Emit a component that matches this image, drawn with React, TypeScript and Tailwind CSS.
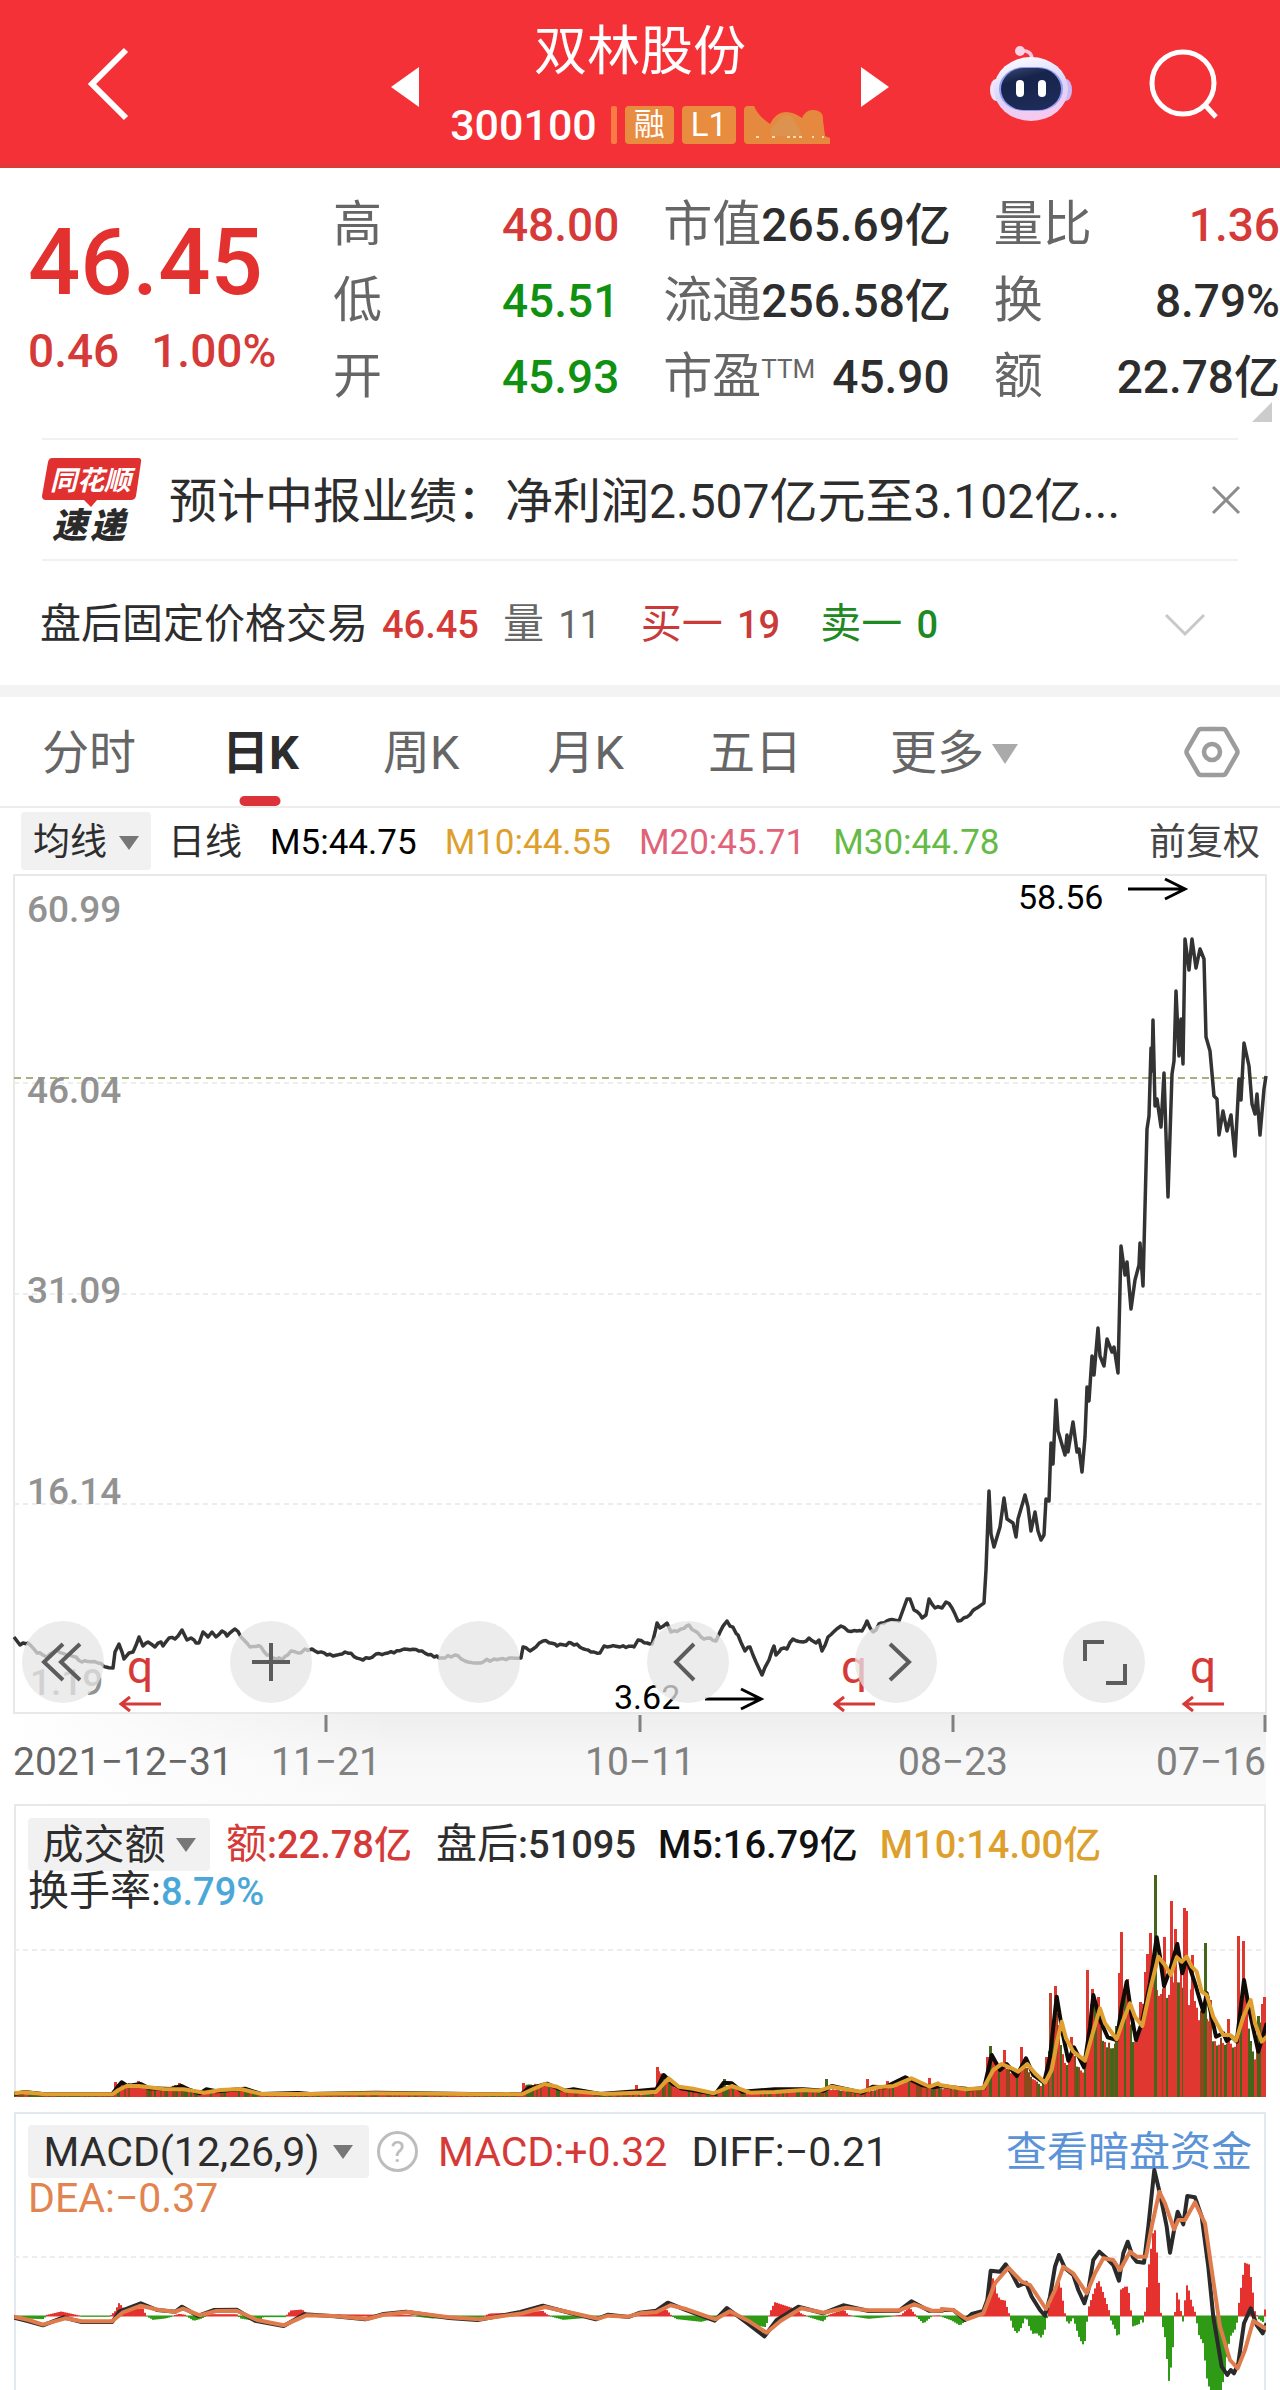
import React from "react";

type Pt = [number, number];

/* Chart traces are kept as "x,y x,y ..." strings. */
const parse = (s: string): Pt[] =>
  s
    .trim()
    .split(/\s+/)
    .map((p) => p.split(",").map(Number) as Pt);

const scale = (pts: Pt[], ox: number, oy: number, kx: number, ky: number): Pt[] =>
  pts.map(([x, y]) => [ox + x / kx, oy + y / ky]);

const toPath = (pts: Pt[]) =>
  pts.map(([x, y], i) => `${i ? "L" : "M"}${x.toFixed(1)} ${y.toFixed(1)}`).join("");

const noise = (n: number) => {
  const v = Math.sin(n * 127.1) * 43758.5453;
  return v - Math.floor(v);
};

const at = (pts: Pt[], x: number) => {
  for (let i = 1; i < pts.length; i++) {
    if (x <= pts[i][0]) {
      const [x0, y0] = pts[i - 1];
      const [x1, y1] = pts[i];
      return y0 + ((y1 - y0) * (x - x0)) / (x1 - x0 || 1);
    }
  }
  return pts[pts.length - 1][1];
};

const jitter = (pts: Pt[], step: number, amount: number): Pt[] => {
  const out: Pt[] = [];
  for (let i = 0; i < pts.length - 1; i++) {
    out.push(pts[i]);
    const [x0, y0] = pts[i];
    const [x1, y1] = pts[i + 1];
    for (let x = x0 + step; x < x1 - 1; x += step)
      out.push([x, y0 + ((y1 - y0) * (x - x0)) / (x1 - x0) + (noise(x) - 0.5) * amount]);
  }
  out.push(pts[pts.length - 1]);
  return out;
};

/* ---------- price ---------- */
const quietPrice = parse(`14,1637 20,1645 28,1643 37,1653 47,1657 57,1650 67,1655 76,1657 82,1662 98,1663 106,1667 113,1668
115,1652 119,1644 124,1659 129,1653 133,1652 139,1637 143,1646 148,1642 155,1647 161,1642 163,1646 169,1638 175,1639
182,1630 187,1640 191,1638 196,1643 199,1643 203,1632 208,1637 212,1632 216,1637 222,1631 227,1636 235,1629 241,1637
250,1647 261,1647 267,1655 282,1660 291,1651 298,1653 305,1649 312,1649 327,1655 333,1656 345,1652 363,1660 376,1654
388,1653 404,1649 422,1651 439,1658 455,1655 465,1661 478,1663 494,1659 521,1658 523,1647 530,1651 543,1641 557,1646
571,1643 588,1650 600,1653 604,1646 620,1647 634,1647 638,1640 652,1644 657,1623 660,1628 667,1623 671,1632 681,1629
689,1625 701,1637 716,1641 720,1632 727,1621 738,1635 745,1651 750,1647 756,1662 762,1675 769,1660 774,1646 776,1655
781,1649 787,1649 793,1639 803,1642 809,1638 816,1643 819,1640 822,1651 828,1637 841,1626 848,1631 862,1631 867,1621
873,1632 881,1623 889,1620 899,1621 903,1610 907,1599 910,1599 914,1610 922,1618 926,1615 929,1599 935,1608 942,1608
946,1602 952,1608 958,1621 967,1617 975,1609 984,1603`);
const rallyPrice = parse(`984,1603 986,1570 989,1491 991,1534 994,1547 1000,1527 1004,1498 1007,1519 1013,1523 1016,1537 1018,1519
1025,1495 1028,1507 1031,1531 1035,1512 1038,1531 1041,1540 1044,1535 1046,1499 1049,1501 1051,1443 1053,1464 1056,1400
1058,1431 1065,1455 1067,1435 1068,1452 1073,1422 1077,1452 1079,1449 1082,1472 1085,1437 1087,1387 1089,1401 1092,1356
1094,1375 1098,1328 1100,1356 1104,1366 1107,1339 1112,1352 1114,1347 1118,1373 1121,1246 1125,1275 1127,1262 1131,1309
1135,1280 1139,1265 1140,1243 1143,1286 1147,1129 1149,1116 1151,1048 1152,1071 1153,1020 1155,1106 1157,1099 1161,1127
1164,1073 1168,1197 1172,1074 1174,1061 1176,991 1179,1056 1181,1019 1183,1064 1185,939 1189,970 1192,939 1196,968
1200,949 1204,959 1206,1037 1210,1051 1214,1096 1217,1099 1219,1135 1223,1111 1227,1131 1231,1115 1235,1156 1239,1079
1241,1100 1244,1043 1249,1066 1252,1104 1255,1114 1257,1094 1260,1135 1264,1089 1266,1076`);
const pricePath = toPath([...jitter(quietPrice, 3, 3), ...rallyPrice]);

/* ---------- turnover ---------- */
const BASE = 2097;
const volLeft = (s: string) => scale(parse(s), 0, 1960, 2.45, 3);
const volMid = (s: string) => scale(parse(s), 640, 1960, 2.45, 3);
const volRight = (s: string) => scale(parse(s), 940, 1840, 3, 3);

const volMa10 = [
  ...volLeft(`35,400 60,397 110,403 275,403 290,390 310,378 340,378 400,387 450,388 500,398 540,390 590,387 640,402 760,402
  920,400 1200,403 1280,402 1310,385 1335,372 1365,380 1385,392 1420,395 1480,402 1560,398`),
  ...volMid(`0,398 40,395 70,355 95,380 130,386 180,400 225,378 270,398 330,396 400,390 440,392 470,380 540,395 580,382 620,378
  665,355 710,380 730,370`),
  ...volRight(`0,735 75,748 130,745 160,690 185,672 215,685 235,695 262,672 285,700 315,728 335,690 350,610 365,545 378,595
  400,635 435,662 455,590 480,505 495,550 530,598 550,540 570,490 585,530 607,558 630,450 655,350 675,375 692,405 710,352
  725,365 740,350 755,380 770,395 785,455 800,465 820,530 850,585 870,585 888,602 910,530 932,480 945,550 965,605 980,590`),
];
const volMa5 = [
  ...volLeft(`35,402 60,396 110,403 275,403 290,378 298,367 312,378 345,372 365,385 420,387 445,378 465,390 490,400 505,388
  530,394 600,386 640,402 730,399 760,402 920,398 1200,403 1278,402 1295,384 1315,380 1340,371 1365,384 1385,392 1405,388 1470,402 1560,394`),
  ...volMid(`0,392 40,388 58,345 80,372 100,385 185,402 205,368 225,370 250,395 330,388 400,388 450,392 470,378 545,398 570,380
  600,382 650,352 690,375 720,382`),
  ...volRight(`0,738 90,748 132,745 155,645 180,690 200,672 230,708 258,655 280,705 312,728 330,650 350,470 370,590 385,662
  402,622 432,682 450,560 460,465 480,540 503,592 530,600 545,500 560,425 575,530 588,600 605,550 630,430 650,292 660,350
  672,438 690,390 712,312 727,400 740,355 765,430 790,515 800,460 828,590 850,580 860,603 875,590 890,605 912,420 930,520
  955,635 980,550`),
];
const volTop = [
  ...volLeft(`35,400 70,404 275,404 283,372 310,370 400,385 440,372 470,392 520,392 600,388 640,404 1275,404 1285,372 1330,372
  1370,388 1430,392 1480,404 1545,402 1560,376`),
  ...volMid(`0,404 36,400 44,335 60,360 90,385 140,390 185,404 205,375 230,385 260,402 330,388 400,392 470,388 545,400 580,386
  620,380 660,354 700,380 730,372`),
  ...volRight(`0,745 80,750 130,742 135,690 140,652 150,625 158,660 185,680 205,690 225,705 240,690 255,680 270,710 300,735
  315,700 325,620 340,500 352,520 362,620 375,680 392,610 410,680 430,700 440,600 450,480 470,480 485,590 510,620 530,610
  545,430 560,430 575,590 590,590 600,520 615,440 630,350 645,430 660,450 680,440 700,400 720,400 742,470 755,440 770,520
  790,500 820,600 860,600 885,620 900,500 912,420 925,560 943,660 955,540 970,500 980,480`),
];
const RED = "#e03730";
const GREEN = "#44661a";
const spikes: [number, number, string][] = [
  [987, 2057, RED], [990, 2046, GREEN], [1004, 2050, RED], [1021, 2047, RED], [1046, 2057, RED], [1050, 1993, "#b8452c"],
  [1055, 1986, RED], [1071, 2037, RED], [1087, 1970, RED], [1092, 1989, RED], [1098, 1997, RED], [1116, 2026, GREEN],
  [1119, 1973, RED], [1121, 1932, RED], [1127, 1979, RED], [1140, 2002, RED], [1145, 1972, RED], [1147, 1954, RED],
  [1150, 1933, RED], [1155, 1875, GREEN], [1164, 1937, RED], [1171, 1901, RED], [1175, 1929, RED], [1184, 1908, RED],
  [1186, 1911, RED], [1192, 1955, RED], [1205, 1943, GREEN], [1210, 2000, "#b8452c"], [1228, 2019, RED], [1238, 1936, RED],
  [1243, 1941, RED], [1258, 2016, GREEN], [1262, 2004, RED], [1264, 1997, RED], [657, 2067, RED], [724, 2079, GREEN],
  [826, 2079, GREEN], [867, 2079, RED], [887, 2081, RED], [929, 2078, RED], [115, 2082, RED], [138, 2081, RED],
  [179, 2083, RED], [523, 2083, RED], [636, 2085, RED],
];
const bars = Array.from({ length: 626 }, (_, i) => {
  const x = 14 + i * 2;
  const h = BASE - at(volTop, x);
  return { x, h: Math.max(1, h * (0.9 + noise(i) * 0.14)), c: noise(i * 3 + 1) > 0.45 ? RED : noise(i) > 0.5 ? "#8a4a1c" : GREEN };
});

/* ---------- MACD ---------- */
const ZERO = 2316;
const macdRight = (s: string) => scale(parse(s), 940, 2110, 3, 3);
const slowLine = `35,1070 70,1080 105,1094 160,1075 200,1084 275,1084 300,1058 345,1037 390,1050 430,1055 448,1046 490,1066
530,1053 580,1052 630,1080 695,1096 750,1066 820,1068 900,1077 940,1064 1000,1056 1100,1072 1175,1078 1280,1060 1335,1041
1400,1058 1465,1076 1490,1067 1540,1070`;
const fastLine = `30,1072 70,1084 105,1096 155,1072 200,1086 275,1086 292,1055 345,1030 385,1050 430,1055 446,1040 485,1068
525,1050 580,1049 625,1082 695,1098 745,1063 820,1069 895,1078 940,1062 995,1055 1100,1074 1170,1080 1275,1056 1330,1037
1395,1058 1460,1078 1490,1064 1540,1071`;
const dea = [
  ...volLeft(slowLine),
  ...volMid(`0,1060 40,1056 75,1036 115,1048 185,1078 220,1054 265,1082 310,1118 345,1082 395,1045 450,1058 505,1043 560,1051
  635,1051 672,1033 715,1052 740,1052`),
  ...macdRight(`5,597 40,600 80,628 130,610 165,520 205,473 245,515 270,525 318,597 345,540 370,470 400,490 440,550 465,490
  490,445 520,450 540,480 570,425 590,440 618,440 635,350 658,245 675,280 702,358 715,330 735,330 765,277 795,340 815,480
  840,650 870,750 893,775 915,720 940,632 975,655 980,650`),
];
const diff = [
  ...volLeft(fastLine),
  ...volMid(`0,1058 40,1052 68,1028 108,1048 183,1082 213,1044 258,1085 305,1129 335,1080 388,1040 448,1060 498,1036 560,1053
  635,1052 665,1024 708,1052 740,1053`),
  ...macdRight(`5,600 40,600 75,630 95,612 130,603 142,570 152,482 180,485 197,463 215,490 235,528 258,518 275,560 300,600
  315,617 330,560 345,470 357,435 375,475 400,495 415,540 433,580 445,540 460,450 478,425 495,440 520,465 537,512 550,430
  563,395 578,440 590,455 612,458 625,350 643,180 655,230 668,290 680,350 690,428 705,345 713,305 730,343 742,258 765,262
  785,320 805,470 820,620 845,770 862,795 872,780 882,790 895,760 912,640 932,595 950,645 968,670 980,640`),
];
const hist = [
  ...volLeft(`35,1067 60,1074 105,1076 115,1066 150,1056 180,1064 200,1069 270,1069 282,1055 292,1030 305,1050 350,1046 358,1067
  375,1078 405,1074 440,1063 455,1066 475,1081 495,1074 510,1064 580,1064 590,1074 635,1084 645,1070 700,1070 712,1053
  740,1050 755,1064 1000,1066 1060,1074 1180,1072 1200,1062 1290,1058 1330,1054 1342,1066 1380,1078 1440,1072 1540,1066`),
  ...volMid(`0,1066 40,1062 62,1046 76,1066 90,1076 150,1084 195,1070 215,1050 235,1066 250,1076 285,1095 308,1100 318,1060
  330,1028 375,1046 398,1064 440,1080 450,1083 460,1067 500,1050 510,1066 560,1075 640,1066 660,1043 675,1066 695,1089 715,1068`),
  ...macdRight(`0,617 35,630 60,645 85,625 95,617 130,612 142,580 150,475 160,510 170,550 180,570 195,573 205,605 210,620
  220,655 230,668 240,660 258,617 268,650 278,670 290,668 305,683 318,650 323,605 335,570 350,520 360,515 370,580 378,630
  388,640 400,622 415,675 428,703 436,690 444,600 460,550 475,510 490,550 508,605 513,630 525,655 535,688 541,640 543,540
  560,528 570,560 574,617 578,648 600,640 605,620 610,640 616,600 625,480 643,340 652,440 662,600 665,630 675,680 688,822
  700,700 704,617 712,540 722,600 729,633 734,580 742,520 755,580 768,615 775,670 790,700 800,800 815,860 840,870 858,760
  870,680 890,650 893,610 905,520 915,460 928,465 938,540 945,605 955,625 970,635 975,600 980,590`),
];
const histBars = Array.from({ length: 626 }, (_, i) => {
  const x = 14 + i * 2;
  return { x, y: at(hist, x + 1) };
});

/* ---------- small pieces ---------- */
const Num = ({ children, className = "" }: { children: React.ReactNode; className?: string }) => (
  <span className={`text-[38px] ${className}`}>{children}</span>
);

const Caret = ({ className = "" }: { className?: string }) => (
  <svg viewBox="0 0 20 14" className={`h-[14px] w-5 ${className}`} aria-hidden="true">
    <path d="M0 0H20L10 14Z" fill="currentColor" />
  </svg>
);

const Robot = () => (
  <svg viewBox="0 0 82 76" className="h-[76px] w-[82px]" aria-hidden="true">
    <defs>
      <linearGradient id="shell" x1="0" y1="0" x2="0.3" y2="1">
        <stop offset="0" stopColor="#fff" />
        <stop offset="0.6" stopColor="#d9d6fb" />
        <stop offset="1" stopColor="#f6c9ee" />
      </linearGradient>
      <linearGradient id="visor" x1="0" y1="0" x2="0.4" y2="1">
        <stop offset="0" stopColor="#3c4a78" />
        <stop offset="0.35" stopColor="#16234a" />
        <stop offset="1" stopColor="#1d2b58" />
      </linearGradient>
    </defs>
    <path d="M30 5C38 4 42 7 42 14" fill="none" stroke="#fbc6df" strokeWidth="3.5" />
    <circle cx="30" cy="5" r="5" fill="#fbd3e6" />
    <ellipse cx="6" cy="44" rx="6" ry="11" fill="#f0e4fb" />
    <ellipse cx="76" cy="44" rx="6" ry="11" fill="#c9b8f4" />
    <ellipse cx="41" cy="43" rx="37" ry="32" fill="url(#shell)" />
    <rect x="9" y="21" width="64" height="44" rx="25" fill="#8f9af0" />
    <rect x="11" y="22" width="60" height="42" rx="23" fill="url(#visor)" />
    <rect x="26" y="34" width="8" height="17" rx="4" fill="#fff" />
    <rect x="48" y="34" width="8" height="17" rx="4" fill="#fff" />
  </svg>
);

const CourierLogo = () => (
  <svg viewBox="0 -10 100 106" className="h-[106px] w-[100px] shrink-0" role="img" aria-label="同花顺速递">
    <path d="M10 1H96Q100 1 99 5L94 39Q93 43 89 43H55L49 50L42 43H4Q0 43 0 39L6 5Q7 1 10 1Z" fill="#e0302f" />
    <text x="8" y="33" fontSize="27" fontWeight="700" fontStyle="italic" fill="#fff">
      同花顺
    </text>
    <text x="10" y="81" fontSize="35" fontWeight="900" fontStyle="italic" fill="#2b2b2b">
      速
    </text>
    <text x="48" y="81" fontSize="35" fontWeight="900" fontStyle="italic" fill="#2b2b2b">
      递
    </text>
  </svg>
);

const stats = [
  [
    { k: "高", v: "48.00", c: "text-[#d53a38]" },
    { k: "低", v: "45.51", c: "text-[#109112]" },
    { k: "开", v: "45.93", c: "text-[#109112]" },
  ],
  [
    { k: "市值", v: "265.69亿", c: "text-[#2d2d2d]" },
    { k: "流通", v: "256.58亿", c: "text-[#2d2d2d]" },
    { k: "市盈", sup: "TTM", v: "45.90", c: "text-[#2d2d2d]" },
  ],
  [
    { k: "量比", v: "1.36", c: "text-[#d53a38]" },
    { k: "换", v: "8.79%", c: "text-[#2d2d2d]" },
    { k: "额", v: "22.78亿", c: "text-[#2d2d2d]" },
  ],
];

const Marker = ({ x }: { x: number }) => (
  <g>
    <text x={x + 8} y="1683" fontSize="46" fill="#d53a38">
      q
    </text>
    <path d={`M${x + 42} 1704H${x + 2}M${x + 11} 1697L${x + 2} 1704L${x + 11} 1711`} fill="none" stroke="#d53a38" strokeWidth="3" />
  </g>
);

const tools = [
  { label: "最早", d: "M41 23L22 41L41 59M58 23L39 41L58 59" },
  { label: "放大", d: "M41 22V60M22 41H60" },
  { label: "缩小", d: "" },
  { label: "向左", d: "M47 23L29 41L47 59" },
  { label: "向右", d: "M35 23L54 41L35 59" },
  { label: "全屏", d: "M22 40V21H41M62 43V62H43" },
];

export default function App() {
  return (
    <main className="w-full overflow-hidden bg-white font-[Roboto,'Noto_Sans_CJK_SC',sans-serif] text-[#2d2d2d]">
      <header className="grid h-[168px] grid-cols-[1fr_498px_1fr] items-center border-b-4 border-[#df3a38] bg-[#f33136] pt-1 text-white">
        <button type="button" aria-label="返回" className="ml-[84px] w-12">
          <svg viewBox="0 0 48 76" className="h-[76px] w-12" aria-hidden="true">
            <path d="M42 4L8 38L42 72" fill="none" stroke="#fff" strokeWidth="6" />
          </svg>
        </button>
        <div className="flex items-center justify-between pt-1.5">
          <button type="button" aria-label="上一只">
            <svg viewBox="0 0 28 40" className="h-10 w-7" aria-hidden="true">
              <path d="M28 0V40L0 20Z" fill="#fff" />
            </svg>
          </button>
          <div className="flex flex-col items-center">
            <h1 className="text-[53px] leading-[76px]">双林股份</h1>
            <div className="flex h-[70px] items-center gap-2">
              <span className="mr-1.5 text-[43px] font-medium">300100</span>
              <span className="h-[38px] w-1.5 rounded-xs bg-[#fb7b45]" />
              <span className="flex h-[38px] w-[49px] items-center justify-center rounded-sm bg-[#e88c40] text-[31px]">融</span>
              <span className="flex h-[38px] w-[54px] items-center justify-center rounded-sm bg-[#e88c40] text-[33px]">L1</span>
              <svg viewBox="0 0 86 38" className="h-[38px] w-[86px]" aria-hidden="true">
                <path d="M4 0H10Q14 10 26 18Q32 6 42 6Q50 6 58 12Q62 3 70 4Q80 5 79 14L81 30L86 32V38H4Q0 38 0 34V4Q0 0 4 0Z" fill="#e5893f" />
                <path d="M26 24L38 10L46 9L54 20L58 30H28Z" fill="#dc9350" />
                <path d="M12 31H15M28 31H31M43 31H46M49 31H52M55 31H58M68 31H70M78 31H80" stroke="#f8d9b4" strokeWidth="2" />
              </svg>
            </div>
          </div>
          <button type="button" aria-label="下一只">
            <svg viewBox="0 0 28 40" className="h-10 w-7" aria-hidden="true">
              <path d="M0 0V40L28 20Z" fill="#fff" />
            </svg>
          </button>
        </div>
        <div className="flex items-center gap-[76px] pl-[101px]">
          <button type="button" aria-label="智能助手">
            <Robot />
          </button>
          <button type="button" aria-label="搜索">
            <svg viewBox="0 0 72 72" className="size-[72px]" aria-hidden="true">
              <circle cx="35" cy="35" r="31" fill="none" stroke="#fff" strokeWidth="5" />
              <path d="M56 56L68 69" stroke="#fff" strokeWidth="5" />
            </svg>
          </button>
        </div>
      </header>

      <section className="relative flex h-[270px] pt-[19px]">
        <div className="w-[333px] shrink-0 pl-7 text-[#d53a38]">
          <p className="pt-4 text-[92px] leading-[120px] font-medium text-[#e3312f]">46.45</p>
          <p className="flex gap-8 text-[46px] leading-[56px] font-medium">
            <span>0.46</span>
            <span>1.00%</span>
          </p>
        </div>
        <div className="grid flex-1 grid-cols-3 gap-x-11">
          {stats.map((col, i) => (
            <dl key={i}>
              {col.map((s) => (
                <div key={s.k} className="flex h-[76px] items-center justify-between whitespace-nowrap">
                  <dt className="flex text-[49px] leading-[76px] text-[#666]">
                    {s.k}
                    {"sup" in s && <span className="text-[26px] leading-[60px]">{s.sup}</span>}
                  </dt>
                  <dd className={`text-[46px] leading-[76px] font-medium ${s.c}`}>{s.v}</dd>
                </div>
              ))}
            </dl>
          ))}
        </div>
        <svg viewBox="0 0 20 20" className="absolute right-2 bottom-4 size-5" aria-hidden="true">
          <path d="M20 0V20H0Z" fill="#ccc" />
        </svg>
      </section>

      <section className="mx-[42px] flex h-[123px] items-center border-y-2 border-[#f1f1f1]">
        <CourierLogo />
        <a href="#report" className="ml-[27px] flex-1 truncate pt-1 text-[48px] leading-[70px]">
          预计中报业绩：净利润2.507亿元至3.102亿...
        </a>
        <button type="button" aria-label="关闭" className="-mr-1">
          <svg viewBox="0 0 32 32" className="size-8" aria-hidden="true">
            <path d="M3 3L29 29M29 3L3 29" stroke="#8c8c8c" strokeWidth="3" />
          </svg>
        </button>
      </section>

      <section className="flex h-[124px] items-center justify-between pt-1 pr-[74px] pl-10 text-[41px] whitespace-nowrap">
        <p className="flex items-baseline">
          <span>盘后固定价格交易</span>
          <Num className="ml-3.5 font-medium text-[#d53a38]">46.45</Num>
          <span className="ml-6 text-[#666]">
            量 <Num className="ml-1">11</Num>
          </span>
          <span className="ml-10 text-[#c93a38]">
            买一 <Num className="ml-1 font-medium">19</Num>
          </span>
          <span className="ml-10 text-[#208a22]">
            卖一 <Num className="ml-1 font-medium">0</Num>
          </span>
        </p>
        <button type="button" aria-label="展开">
          <svg viewBox="0 0 42 24" className="h-6 w-[42px]" aria-hidden="true">
            <path d="M2 2L21 21L40 2" fill="none" stroke="#c8c8c8" strokeWidth="3" />
          </svg>
        </button>
      </section>

      <div className="h-3 bg-[#f3f3f3]" />

      <nav className="flex h-[111px] items-stretch border-b-2 border-[#ececec] pr-10 pl-[42px] text-[47px] text-[#666]">
        <button type="button" className="pt-1">分时</button>
        <button type="button" className="relative ml-[86px] pt-1 font-bold text-[#2d2d2d]">
          日K
          <span className="absolute bottom-0 left-1/2 h-[10px] w-[41px] -translate-x-1/2 rounded-full bg-[#dc333a]" />
        </button>
        <button type="button" className="ml-[84px] pt-1">周K</button>
        <button type="button" className="ml-[88px] pt-1">月K</button>
        <button type="button" className="ml-[84px] pt-1">五日</button>
        <button type="button" className="ml-[88px] flex items-center gap-2 pt-1">
          更多
          <svg viewBox="0 0 26 20" className="h-5 w-[26px]" aria-hidden="true">
            <path d="M0 0H26L13 20Z" fill="#aaa" />
          </svg>
        </button>
        <button type="button" aria-label="设置" className="ml-auto">
          <svg viewBox="0 0 56 52" className="h-[52px] w-14" aria-hidden="true">
            <path d="M17 3H39Q41 3 42 5L53 24Q54 26 53 28L42 47Q41 49 39 49H17Q15 49 14 47L3 28Q2 26 3 24L14 5Q15 3 17 3Z" fill="none" stroke="#9c9c9c" strokeWidth="4.5" />
            <circle cx="28" cy="26" r="8" fill="none" stroke="#9c9c9c" strokeWidth="4.5" />
          </svg>
        </button>
      </nav>

      <div className="flex h-[66px] items-center pr-5 pl-[21px] text-[35px] whitespace-nowrap">
        <button type="button" className="flex h-[58px] w-[130px] items-center justify-center gap-3 rounded-sm bg-[#f1f1f1] pt-1 text-[37px]">
          均线 <Caret className="text-[#777]" />
        </button>
        <span className="ml-[17px] pt-1 text-[37px]">日线</span>
        <span className="ml-7 pt-1 text-black">M5:44.75</span>
        <span className="ml-7 pt-1 text-[#dda02c]">M10:44.55</span>
        <span className="ml-7 pt-1 text-[#e0637a]">M20:45.71</span>
        <span className="ml-7 pt-1 text-[#65bb45]">M30:44.78</span>
        <button type="button" className="ml-auto pt-1 text-[37px] text-[#444]">前复权</button>
      </div>

      <section className="relative">
        <svg viewBox="0 874 1280 930" className="block h-auto w-full" role="img" aria-label="日K走势">
          <defs>
            <linearGradient id="axisDown" x1="0" y1="0" x2="0" y2="1">
              <stop offset="0" stopColor="#eeeeee" />
              <stop offset="0.5" stopColor="#f7f7f7" />
              <stop offset="1" stopColor="#fafafa" />
            </linearGradient>
            <linearGradient id="axisLeft" x1="0" y1="0" x2="1" y2="0">
              <stop offset="0" stopColor="#fff" />
              <stop offset="1" stopColor="#fff" stopOpacity="0" />
            </linearGradient>
          </defs>
          <rect x="14" y="1713" width="1252" height="91" fill="url(#axisDown)" />
          <rect x="14" y="1713" width="380" height="91" fill="url(#axisLeft)" />
          <rect x="14" y="875" width="1252" height="838" fill="none" stroke="#e8e8e8" strokeWidth="2" />
          <g strokeWidth="2" fill="none">
            <path d="M14 1083H1266M14 1294H1266M14 1504H1266" stroke="#ededed" strokeDasharray="5 4" />
            <path d="M14 1078H1266" stroke="#a3b37c" strokeDasharray="7 5" />
          </g>
          <g fontSize="37" fontWeight="500" fill="#929292">
            <text x="27" y="922">60.99</text>
            <text x="27" y="1103">46.04</text>
            <text x="27" y="1303">31.09</text>
            <text x="27" y="1504">16.14</text>
            <text x="30" y="1695">1.19</text>
          </g>
          <g fontSize="34" fill="#000">
            <text x="1018" y="909">58.56</text>
            <text x="614" y="1709">3.62</text>
          </g>
          <g fill="none" stroke="#000" strokeWidth="3">
            <path d="M1128 889H1184M1165 879L1185 889L1165 899" />
            <path d="M705 1699H760M741 1689L761 1699L741 1709" />
          </g>
          <Marker x={119} />
          <Marker x={833} />
          <Marker x={1182} />
          <path d={pricePath} fill="none" stroke="#333" strokeWidth="3.5" strokeLinejoin="round" />
          <path d="M326 1715V1732M640 1715V1732M953 1715V1732M1265 1715V1732" stroke="#808080" strokeWidth="3" />
          <g fontSize="39" fill="#808080">
            <text x="13" y="1775" fill="#666">2021−12−31</text>
            <text x="326" y="1775" textAnchor="middle">11−21</text>
            <text x="640" y="1775" textAnchor="middle">10−11</text>
            <text x="953" y="1775" textAnchor="middle">08−23</text>
            <text x="1266" y="1775" textAnchor="end">07−16</text>
          </g>
        </svg>
        <div className="absolute right-[135px] bottom-[101px] left-[22px] flex justify-between">
          {tools.map((t) => (
            <button key={t.label} type="button" aria-label={t.label} className="size-[82px] rounded-full bg-[#e6e6e6]/75">
              <svg viewBox="0 0 82 82" className="size-full" aria-hidden="true">
                <path d={t.d} fill="none" stroke="#5c5c5c" strokeWidth="4" />
              </svg>
            </button>
          ))}
        </div>
      </section>

      <section className="mx-[14px] grid">
        <div className="relative z-10 pt-[14px] pl-[14px] text-[41px] leading-[40px] whitespace-nowrap [grid-area:1/1]">
          <div className="flex h-[53px] items-center">
            <button type="button" className="flex h-[53px] w-[182px] items-center justify-center gap-2.5 rounded-sm bg-[#f1f1f1]">
              成交额 <Caret className="text-[#777]" />
            </button>
            <span className="ml-4 text-[#d53a38]">
              额<Num className="font-medium">:22.78亿</Num>
            </span>
            <span className="ml-6">
              盘后<Num className="font-medium">:51095</Num>
            </span>
            <Num className="ml-[22px] font-medium text-[#111]">M5:16.79亿</Num>
            <Num className="ml-[22px] font-medium text-[#dda02c]">M10:14.00亿</Num>
          </div>
          <p>
            换手率:<Num className="font-medium text-[#4aa8d8]">8.79%</Num>
          </p>
        </div>
        <svg viewBox="14 1804 1252 308" className="block h-auto w-full [grid-area:1/1]" role="img" aria-label="成交额">
          <path d="M15 2097V1805H1265V2097" fill="none" stroke="#e8e8e8" strokeWidth="2" />
          <path d="M14 1950H1266" stroke="#ededed" strokeWidth="2" strokeDasharray="5 4" />
          {bars.map((b) => (
            <rect key={b.x} x={b.x} y={BASE - b.h} width="2" height={b.h} fill={b.c} />
          ))}
          {spikes.map(([x, y, c]) => (
            <rect key={x} x={x - 1} y={y} width="3" height={BASE - y} fill={c} />
          ))}
          <path d={toPath(volMa5)} fill="none" stroke="#110b08" strokeWidth="4" strokeLinejoin="round" />
          <path d={toPath(volMa10)} fill="none" stroke="#e0a030" strokeWidth="4" strokeLinejoin="round" />
        </svg>
      </section>

      <section className="mx-[14px] grid">
        <div className="relative z-10 pt-[13px] pr-[14px] pl-[14px] text-[41px] leading-[40px] whitespace-nowrap [grid-area:1/1]">
          <div className="flex h-[53px] items-center">
            <button type="button" className="flex h-[53px] w-[341px] items-center justify-center gap-[14px] rounded-sm bg-[#f1f1f1]">
              MACD(12,26,9) <Caret className="text-[#777]" />
            </button>
            <button type="button" aria-label="指标说明" className="ml-2 flex size-[41px] items-center justify-center rounded-full border-3 border-[#bdbdbd] text-[30px] text-[#bdbdbd]">
              ?
            </button>
            <span className="ml-5 text-[#d53a38]">MACD:+0.32</span>
            <span className="ml-6">DIFF:−0.21</span>
            <a href="#funds" className="ml-auto text-[#5b93d8]">
              查看暗盘资金
            </a>
          </div>
          <p className="text-[#e2844f]">DEA:−0.37</p>
        </div>
        <svg viewBox="14 2112 1252 278" className="relative z-20 pointer-events-none block h-auto w-full [grid-area:1/1]" role="img" aria-label="MACD">
          <path d="M15 2390V2113H1265V2390" fill="none" stroke="#e3e8ee" strokeWidth="2" />
          <path d="M14 2257H1266" stroke="#ededed" strokeWidth="2" strokeDasharray="5 4" />
          {histBars.map((b) => (
            <rect
              key={b.x}
              x={b.x}
              y={Math.min(b.y, ZERO) - 0.5}
              width="2"
              height={Math.abs(b.y - ZERO) + 1}
              fill={b.y < ZERO ? "#e5322f" : "#2f9a15"}
            />
          ))}
          <path d={toPath(diff)} fill="none" stroke="#2a2a2a" strokeWidth="4" strokeLinejoin="round" />
          <path d={toPath(dea)} fill="none" stroke="#e07c4c" strokeWidth="4" strokeLinejoin="round" />
        </svg>
      </section>
    </main>
  );
}
